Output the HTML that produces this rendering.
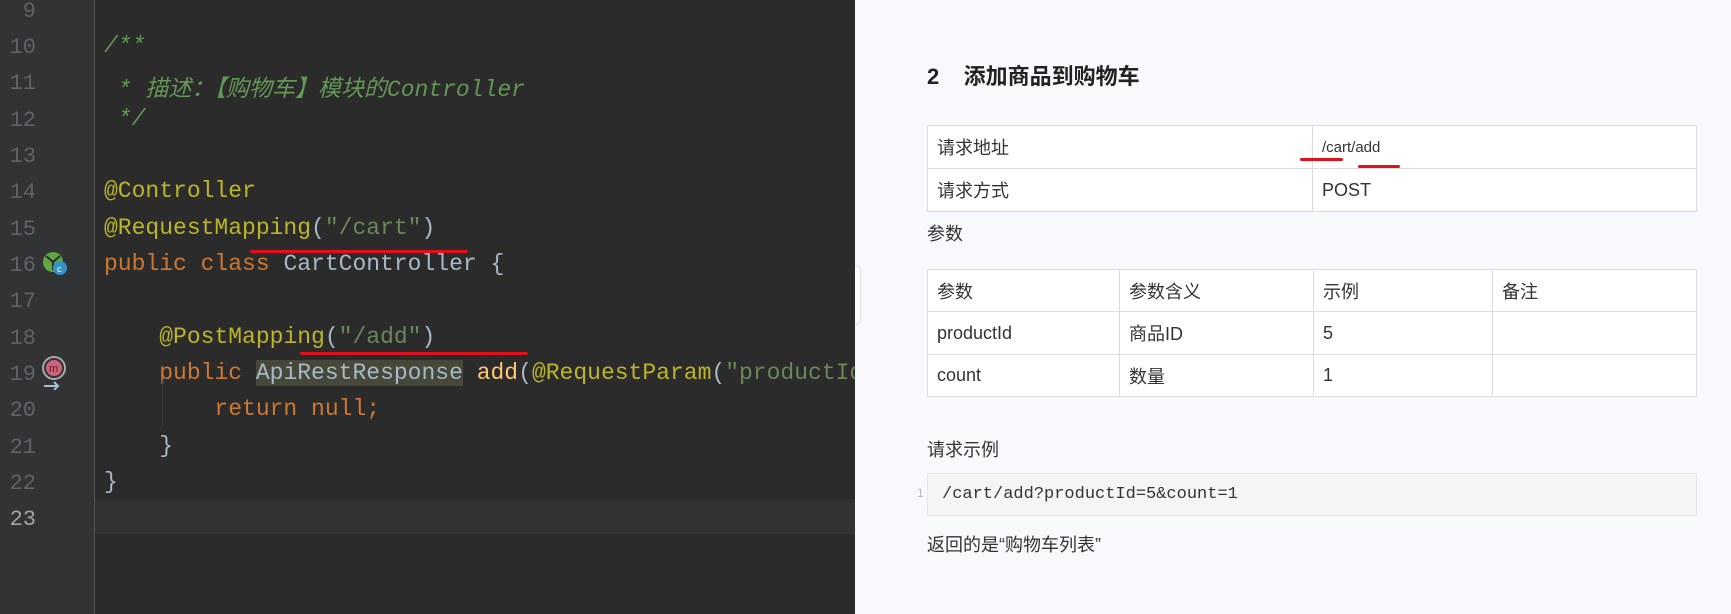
<!DOCTYPE html>
<html><head><meta charset="utf-8"><style>
*{margin:0;padding:0;box-sizing:border-box}
body{width:1731px;height:614px;overflow:hidden;position:relative;background:#2b2b2b}
#ed{position:absolute;left:0;top:0;width:855px;height:614px;background:#2b2b2b;overflow:hidden}
#gut{position:absolute;left:0;top:0;width:95px;height:614px;background:#313335;border-right:1px solid #555}
.ln{position:absolute;left:0;width:36px;text-align:right;font:22px "Liberation Mono",monospace;color:#606366;height:36px;line-height:36px}
.cl{position:absolute;left:104px;height:36px;line-height:36px;font:23px "Liberation Mono","Noto Sans CJK SC",monospace;color:#a9b7c6;white-space:pre}
.cm{color:#629755;font-style:italic}.an{color:#bbb529}.kw{color:#cc7832}.st{color:#6a8759}.fn{color:#ffc66d}
.red{position:absolute;height:3px;background:#e0101c;border-radius:2px}
#rt{position:absolute;left:855px;top:0;width:876px;height:614px;background:#f7f9fc;font-family:"Liberation Sans","Noto Sans CJK SC",sans-serif;color:#333}
table{position:absolute;left:72px;border-collapse:collapse;font-size:18px;color:#333}
td{border:1px solid #dcdcdc;padding:0 9px;background:#fff}
.t{position:absolute;left:72px;font-size:18px}
</style></head><body>
<div id="ed">
<div id="gut"></div>
<div style="position:absolute;left:95px;top:499px;width:760px;height:35px;background:#323232"></div>
<div style="position:absolute;left:0;top:3px">
<div class="ln" style="top:-9px">9</div>
<div class="ln" style="top:27px">10</div>
<div class="ln" style="top:63px">11</div>
<div class="ln" style="top:100px">12</div>
<div class="ln" style="top:136px">13</div>
<div class="ln" style="top:172px">14</div>
<div class="ln" style="top:209px">15</div>
<div class="ln" style="top:245px">16</div>
<div class="ln" style="top:281px">17</div>
<div class="ln" style="top:318px">18</div>
<div class="ln" style="top:354px">19</div>
<div class="ln" style="top:390px">20</div>
<div class="ln" style="top:427px">21</div>
<div class="ln" style="top:463px">22</div>
<div class="ln" style="top:499px;color:#a4a3a3">23</div>
</div>
<div style="position:absolute;left:0;top:6px">
<div class="cl" style="top:27px"><span class="cm">/**</span></div>
<div class="cl" style="top:63px"><span class="cm"> * 描述：【购物车】模块的Controller</span></div>
<div class="cl" style="top:100px"><span class="cm"> */</span></div>
<div class="cl" style="top:172px"><span class="an">@Controller</span></div>
<div class="cl" style="top:209px"><span class="an">@RequestMapping</span>(<span class="st">"/cart"</span>)</div>
<div class="cl" style="top:245px"><span class="kw">public class </span>CartController {</div>
<div class="cl" style="top:318px">    <span class="an">@PostMapping</span>(<span class="st">"/add"</span>)</div>
<div class="cl" style="top:354px">    <span class="kw">public </span><span style="background:#46483a">ApiRestResponse</span> <span class="fn">add</span>(<span class="an">@RequestParam</span>(<span class="st">"productId"</span>) Integer productId</div>
<div class="cl" style="top:390px">        <span class="kw">return null;</span></div>
<div class="cl" style="top:427px">    }</div>
<div class="cl" style="top:463px">}</div>
</div>
<div style="position:absolute;left:162px;top:380px;width:1px;height:46px;background:#3c3c3c"></div>
<div class="red" style="left:250px;top:250px;width:218px"></div>
<div class="red" style="left:300px;top:352px;width:228px"></div>
<svg style="position:absolute;left:40px;top:250px" width="30" height="28"><circle cx="13" cy="12" r="10" fill="#5fa844"/><path d="M6 6l7 6M13 12l7-6M13 12v8" stroke="#2b2b2b" stroke-width="2"/><circle cx="20" cy="18" r="7" fill="#3592c4"/><text x="17" y="22" font-size="9" fill="#fff" font-family="Liberation Sans">c</text></svg>
<svg style="position:absolute;left:40px;top:356px" width="30" height="34"><circle cx="14" cy="12" r="11" fill="none" stroke="#a8a8a8" stroke-width="2"/><circle cx="14" cy="12" r="8" fill="#d0637b"/><text x="9" y="16" font-size="11" fill="#522" font-family="Liberation Sans">m</text><path d="M4 30h14M14 26l4 4-4 4" stroke="#a8c0d8" stroke-width="2" fill="none"/></svg>
</div>
<div id="rt">
<div style="position:absolute;left:72px;top:59px;font-size:22px;font-weight:bold;color:#222">2&nbsp;&nbsp;&nbsp;&nbsp;添加商品到购物车</div>
<table style="top:125px;width:770px"><tr style="height:43px"><td style="width:385px">请求地址</td><td style="font-size:15px">/cart/add</td></tr><tr style="height:43px"><td>请求方式</td><td>POST</td></tr></table>
<div class="red" style="left:445px;top:158px;width:43px"></div>
<div class="red" style="left:503px;top:165px;width:42px"></div>
<div class="t" style="top:220px">参数</div>
<table style="top:269px;width:770px"><tr style="height:42px"><td style="width:192px">参数</td><td style="width:194px">参数含义</td><td style="width:179px">示例</td><td>备注</td></tr>
<tr style="height:43px"><td>productId</td><td>商品ID</td><td>5</td><td></td></tr>
<tr style="height:42px"><td>count</td><td>数量</td><td>1</td><td></td></tr></table>
<div class="t" style="top:436px">请求示例</div>
<div style="position:absolute;left:62px;top:486px;font-size:12px;color:#bbb">1</div>
<div style="position:absolute;left:72px;top:473px;width:770px;height:43px;background:#f5f5f5;border:1px solid #e6e6e6;font:17px 'Liberation Mono',monospace;line-height:42px;padding-left:14px;color:#333">/cart/add?productId=5&amp;count=1</div>
<div class="t" style="top:531px">返回的是“购物车列表”</div>
<div style="position:absolute;left:0;top:265px;width:6px;height:60px;border:1px solid #ddd;border-left:none;border-radius:0 6px 6px 0;background:#fff"></div>
</div>
</body></html>
